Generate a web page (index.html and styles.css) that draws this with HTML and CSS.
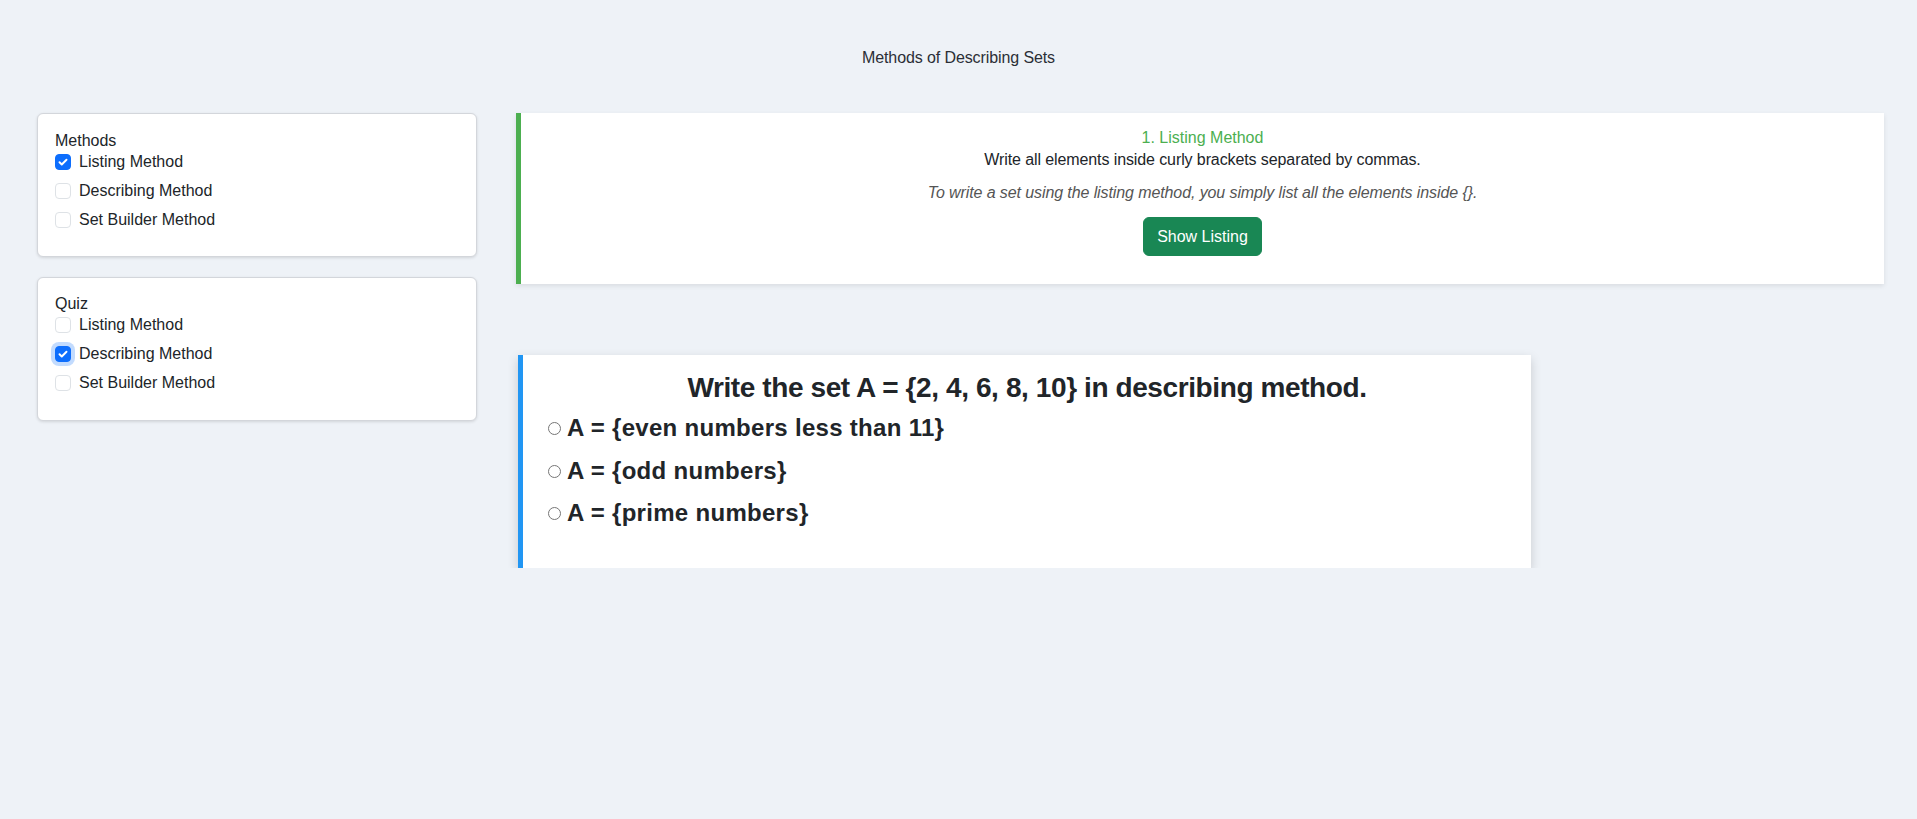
FILE: index.html
```html
<!DOCTYPE html>
<html lang="en">
<head>
<meta charset="utf-8">
<title>Methods of Describing Sets</title>
<link rel="stylesheet" href="styles.css">
</head>
<body>
<header class="page-header">
  <h1 class="page-title">Methods of Describing Sets</h1>
</header>
<main class="layout">
  <aside class="sidebar">
    <section class="panel">
      <div class="panel-title">Methods</div>
      <label class="check-row"><span class="box checked"><svg viewBox="0 0 16 16" width="16" height="16"><path d="M4 8.3l2.6 2.6L12 5.4" fill="none" stroke="#fff" stroke-width="2.2" stroke-linecap="round" stroke-linejoin="round"/></svg></span><span>Listing Method</span></label>
      <label class="check-row"><span class="box"></span><span>Describing Method</span></label>
      <label class="check-row"><span class="box"></span><span>Set Builder Method</span></label>
    </section>
    <section class="panel">
      <div class="panel-title">Quiz</div>
      <label class="check-row"><span class="box"></span><span>Listing Method</span></label>
      <label class="check-row"><span class="box checked focused"><svg viewBox="0 0 16 16" width="16" height="16"><path d="M4 8.3l2.6 2.6L12 5.4" fill="none" stroke="#fff" stroke-width="2.2" stroke-linecap="round" stroke-linejoin="round"/></svg></span><span>Describing Method</span></label>
      <label class="check-row"><span class="box"></span><span>Set Builder Method</span></label>
    </section>
  </aside>
  <div class="content">
    <section class="method-card">
      <p class="method-name">1. Listing Method</p>
      <p class="method-desc">Write all elements inside curly brackets separated by commas.</p>
      <p class="method-note">To write a set using the listing method, you simply list all the elements inside {}.</p>
      <button class="btn-show" type="button">Show Listing</button>
    </section>
    <section class="quiz-card">
      <h3 class="quiz-question">Write the set A = {2, 4, 6, 8, 10} in describing method.</h3>
      <label class="option"><span class="radio"></span><span>A = {even numbers less than 11}</span></label>
      <label class="option"><span class="radio"></span><span>A = {odd numbers}</span></label>
      <label class="option"><span class="radio"></span><span>A = {prime numbers}</span></label>
    </section>
  </div>
</main>
</body>
</html>
```
FILE: styles.css
```css
* { box-sizing: border-box; }

body {
  margin: 0;
  background: #eef2f7;
  font-family: "Liberation Sans", Arial, sans-serif;
  font-size: 16px;
  line-height: 22px;
  color: #212529;
}

.page-header {
  padding: 47px 0 44px;
}

.page-title {
  margin: 0;
  font-size: 16px;
  font-weight: normal;
  line-height: 22px;
  text-align: center;
  color: #2b2f36;
  letter-spacing: -0.1px;
}

.layout {
  display: flex;
  align-items: flex-start;
  gap: 39px;
  padding: 0 33px 0 37px;
}

.sidebar {
  width: 440px;
  flex: none;
  display: flex;
  flex-direction: column;
  gap: 20px;
}

.panel {
  background: #fff;
  border: 1px solid #d3d6db;
  border-radius: 6px;
  box-shadow: 0 1px 3px rgba(0, 0, 0, 0.12);
  padding: 16px 17px 20px;
  height: 144px;
}

.panel + .panel {
  padding-top: 15px;
}

.panel-title {
  line-height: 22px;
}

.check-row {
  display: flex;
  align-items: center;
  gap: 8px;
  height: 24px;
  margin-bottom: 5px;
}

.check-row:first-of-type {
  margin-top: -2px;
}

.box {
  width: 16px;
  height: 16px;
  flex: none;
  border: 1px solid #dee2e6;
  border-radius: 4px;
  background: #fff;
  display: flex;
  align-items: center;
  justify-content: center;
}

.box svg { display: block; }

.box.checked {
  background: #0d6efd;
  border-color: #0d6efd;
}

.box.focused {
  box-shadow: 0 0 0 4px rgba(13, 110, 253, 0.25);
}

.content {
  flex: 1;
  display: flex;
  flex-direction: column;
  align-items: flex-start;
}

.method-card {
  width: 100%;
  height: 171px;
  background: #fff;
  border-left: 5px solid #4caf50;
  box-shadow: 0 2px 5px rgba(0, 0, 0, 0.09);
  padding: 14px 20px 0;
  text-align: center;
  letter-spacing: -0.1px;
}

.method-card p {
  margin: 0;
}

.method-name {
  color: #4caf50;
  letter-spacing: 0;
}

.method-desc {
  margin-bottom: 11px !important;
}

.method-note {
  font-style: italic;
  color: #555;
  margin-bottom: 13px !important;
}

.btn-show {
  font-family: inherit;
  font-size: 16px;
  line-height: 24px;
  color: #fff;
  background: #198754;
  border: 1px solid #198754;
  border-radius: 6px;
  padding: 6px 13.5px;
  height: 39px;
  cursor: pointer;
}

.quiz-card {
  margin-top: 71px;
  margin-left: 2px;
  width: 1013px;
  height: 213px;
  background: #fff;
  border-left: 5px solid #2196f3;
  box-shadow: 0 4px 10px rgba(0, 0, 0, 0.17);
  padding: 16px 20px 0;
}

.quiz-question {
  margin: 0 0 8px;
  font-size: 28px;
  line-height: 34px;
  font-weight: bold;
  text-align: center;
  letter-spacing: -0.4px;
}

.option {
  display: flex;
  align-items: center;
  height: 29px;
  margin-bottom: 13.5px;
  font-size: 24px;
  font-weight: bold;
  line-height: 29px;
  letter-spacing: 0.3px;
}

.radio {
  width: 13px;
  height: 13px;
  flex: none;
  border: 1px solid #767676;
  border-radius: 50%;
  background: #fff;
  margin: 2px 6px 0 5px;
}
```
